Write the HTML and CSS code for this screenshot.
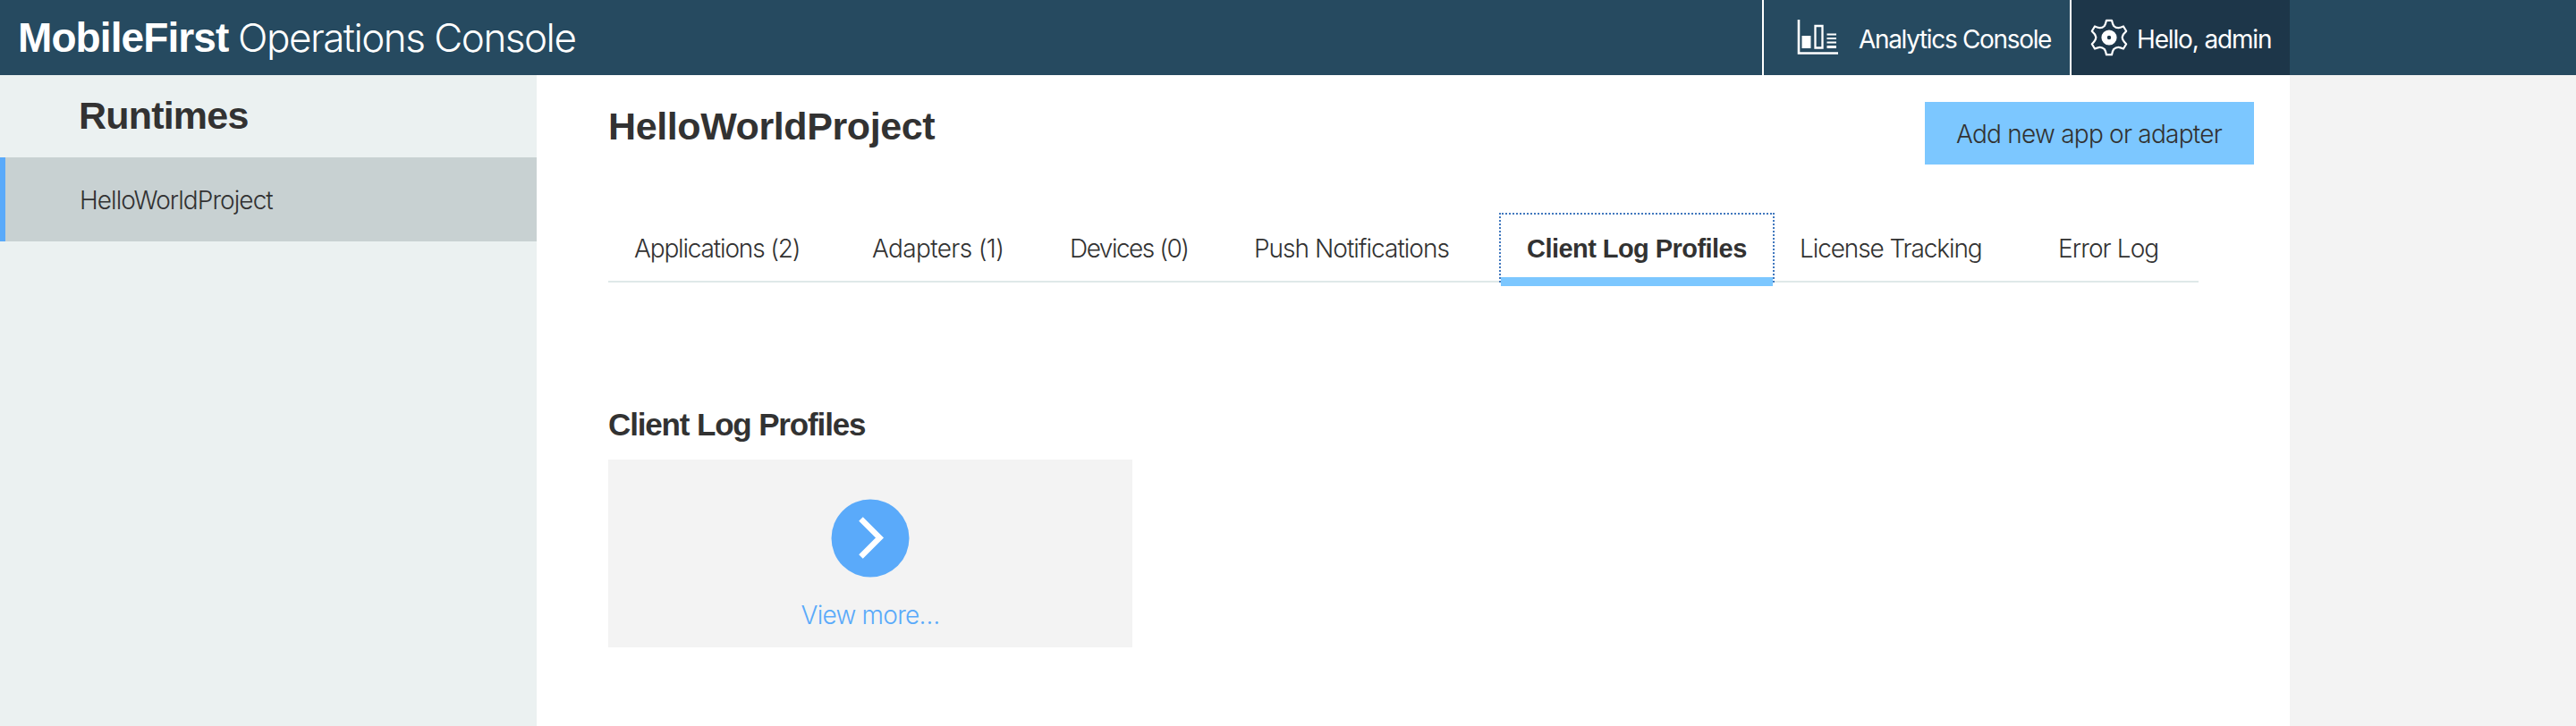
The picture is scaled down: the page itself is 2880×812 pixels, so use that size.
FILE: index.html
```html
<!DOCTYPE html>
<html lang="en">
<head>
<meta charset="utf-8">
<title>MobileFirst Operations Console</title>
<link rel="stylesheet" href="styles.css">
</head>
<body>
<header class="topbar">
  <div class="brand"><strong class="brand-name">MobileFirst</strong><span class="brand-sub">Operations Console</span></div>
  <a class="analytics">
    <svg class="chart-icon" width="50" height="44" viewBox="0 0 50 44" fill="none" stroke="#fff">
      <path d="M3 1V38.500H47" stroke-width="2.6"/>
      <path d="M6.500 19h10v14h-10z" fill="#fff" stroke="none"/>
      <path d="M21.500 8h8v24.500h-8z" stroke-width="2.300"/>
      <path d="M34.500 17.500h10.500M34.500 22h10.500M34.500 26.500h10.500" stroke-width="1.900"/>
      <path d="M34.500 31.500h10.500" stroke-width="3"/>
    </svg>
    <span class="analytics-label">Analytics Console</span>
  </a>
  <a class="user">
    <svg class="gear-icon" width="42" height="42" viewBox="0 0 42 42" fill="none" stroke="#fff">
      <path d="M18 1.800h6q1 4.700 2.200 6.200 2.300 2.300 5.300 2.200 1.500-.1 5.500-1.700l3.200 5.300Q36.500 17 35.700 20.500q0 3.500 4.500 7.700L37 33.500q-4-1.600-5.500-1.700-3-.1-5.300 2.200Q25 35.500 24 40.200h-6Q17 35.500 15.800 34q-2.300-2.300-5.300-2.200Q9 31.900 5 33.500L1.800 28.200q4.500-4.200 4.500-7.700Q5.500 17 1.800 13.800L5 8.500q4 1.600 5.500 1.700 3 .1 5.300-2.200Q17 6.500 18 1.800z" stroke-width="2.200" stroke-linejoin="round"/>
      <circle cx="21" cy="21" r="5.400" stroke-width="6.400"/>
    </svg>
    <span class="user-label">Hello, admin</span>
  </a>
</header>
<div class="layout">
  <nav class="sidebar">
    <h2 class="side-title">Runtimes</h2>
    <a class="side-item">HelloWorldProject</a>
  </nav>
  <main class="content">
    <div class="page-head">
      <h1 class="page-title">HelloWorldProject</h1>
      <button class="add-button">Add new app or adapter</button>
    </div>
    <div class="tabs">
      <a class="tab tab-applications">Applications (2)</a>
      <a class="tab tab-adapters">Adapters (1)</a>
      <a class="tab tab-devices">Devices (0)</a>
      <a class="tab tab-push">Push Notifications</a>
      <a class="tab tab-active">Client Log Profiles</a>
      <a class="tab tab-license">License Tracking</a>
      <a class="tab tab-errors">Error Log</a>
    </div>
    <h3 class="section-title">Client Log Profiles</h3>
    <a class="card">
      <svg width="88" height="88" viewBox="0 0 88 88" fill="none">
        <circle cx="44" cy="44" r="43.500" fill="#5aaafa"/>
        <path d="M33.500 22.500 54.500 43.500 33.500 64.500" stroke="#fff" stroke-width="6.400"/>
      </svg>
      <span class="card-label">View more…</span>
    </a>
  </main>
</div>
</body>
</html>
```
FILE: styles.css
```css
* { box-sizing: border-box; }
body {
  margin: 0;
  background: #f3f3f3;
  color: #323232;
  font: 300 28px/34px Inter, "Liberation Sans", sans-serif;
}
h1, h2, h3 { margin: 0; font-family: "Liberation Sans", Arial, sans-serif; font-weight: 700; }

/* Top bar */
.topbar {
  display: flex;
  height: 84px;
  padding-right: 320px;
  background: #264a60;
  color: #fff;
}
.brand {
  display: flex;
  align-items: baseline;
  flex: 1;
  padding: 14px 0 0 20px;
  font-size: 44px;
  line-height: 56px;
  white-space: nowrap;
}
.brand-name {
  width: 246px;
  font: 700 46px/56px "Liberation Sans", Arial, sans-serif;
  letter-spacing: -0.9px;
}
.brand-sub { letter-spacing: -1.5px; }
.analytics, .user {
  display: flex;
  align-items: flex-start;
  border-left: 2px solid #fff;
  white-space: nowrap;
}
.analytics { width: 344px; padding-left: 36px; }
.user { width: 246px; padding-left: 21px; background: #1d3649; }
.chart-icon { margin-top: 21px; }
.gear-icon { margin-top: 21px; }
.analytics-label { margin: 27px 0 0 20px; letter-spacing: -1.33px; font-weight: 400; }
.user-label { margin: 27px 0 0 10px; letter-spacing: -1.15px; font-weight: 400; }

/* Columns */
.layout { display: flex; width: 2560px; height: 728px; background: #fff; }
.sidebar { width: 600px; background: #ebf1f1; }
.side-title { height: 92px; padding: 20px 0 0 88px; font-size: 43px; line-height: 50px; letter-spacing: -0.8px; }
.side-item {
  display: block;
  height: 94px;
  padding: 31px 0 0 83px;
  border-left: 6px solid #5aaafa;
  background: #c8d1d2;
  letter-spacing: -0.94px;
}
.content { flex: 1; padding: 30px 40px 0 80px; }

/* Heading row */
.page-head { display: flex; justify-content: space-between; height: 124px; }
.page-title { margin-top: 2px; font-size: 43px; line-height: 50px; letter-spacing: -0.4px; }
.add-button {
  width: 368px;
  height: 70px;
  padding: 2px 1px 0 0;
  border: 0;
  background: #7cc7ff;
  color: #323232;
  font: inherit;
  letter-spacing: -0.76px;
}

/* Tabs */
.tabs {
  display: grid;
  grid-template-columns: 266px 221px 206px 303px 308px 288px 1fr;
  width: 1778px;
  height: 78px;
  border-bottom: 2px solid #dfe9e9;
}
.tab { padding: 23px 0 0 29px; white-space: nowrap; }
.tab-applications { letter-spacing: -1.16px; }
.tab-adapters { letter-spacing: -0.65px; }
.tab-devices { letter-spacing: -1.5px; }
.tab-push { letter-spacing: -0.98px; }
.tab-active {
  position: relative;
  height: 78px;
  margin-right: 0;
  padding-top: 21px;
  border: 2px dotted #4178be;
  border-bottom: 0;
  font: 700 29px/34px "Liberation Sans", Arial, sans-serif;
  letter-spacing: -0.55px;
}
.tab-active::after {
  content: "";
  position: absolute;
  right: 0;
  bottom: -4px;
  left: 0;
  height: 10px;
  background: #7cc7ff;
}
.tab-license { padding-left: 28px; letter-spacing: -1.1px; }
.tab-errors { letter-spacing: -0.9px; }

/* Card section */
.section-title { margin: 138px 0 18px; font-size: 35px; line-height: 42px; letter-spacing: -1.15px; }
.card {
  display: flex;
  flex-direction: column;
  align-items: center;
  width: 586px;
  height: 210px;
  padding-top: 44px;
  background: #f3f3f3;
  color: #5aaafa;
}
.card-label { margin-top: 25px; letter-spacing: -0.75px; }
```
